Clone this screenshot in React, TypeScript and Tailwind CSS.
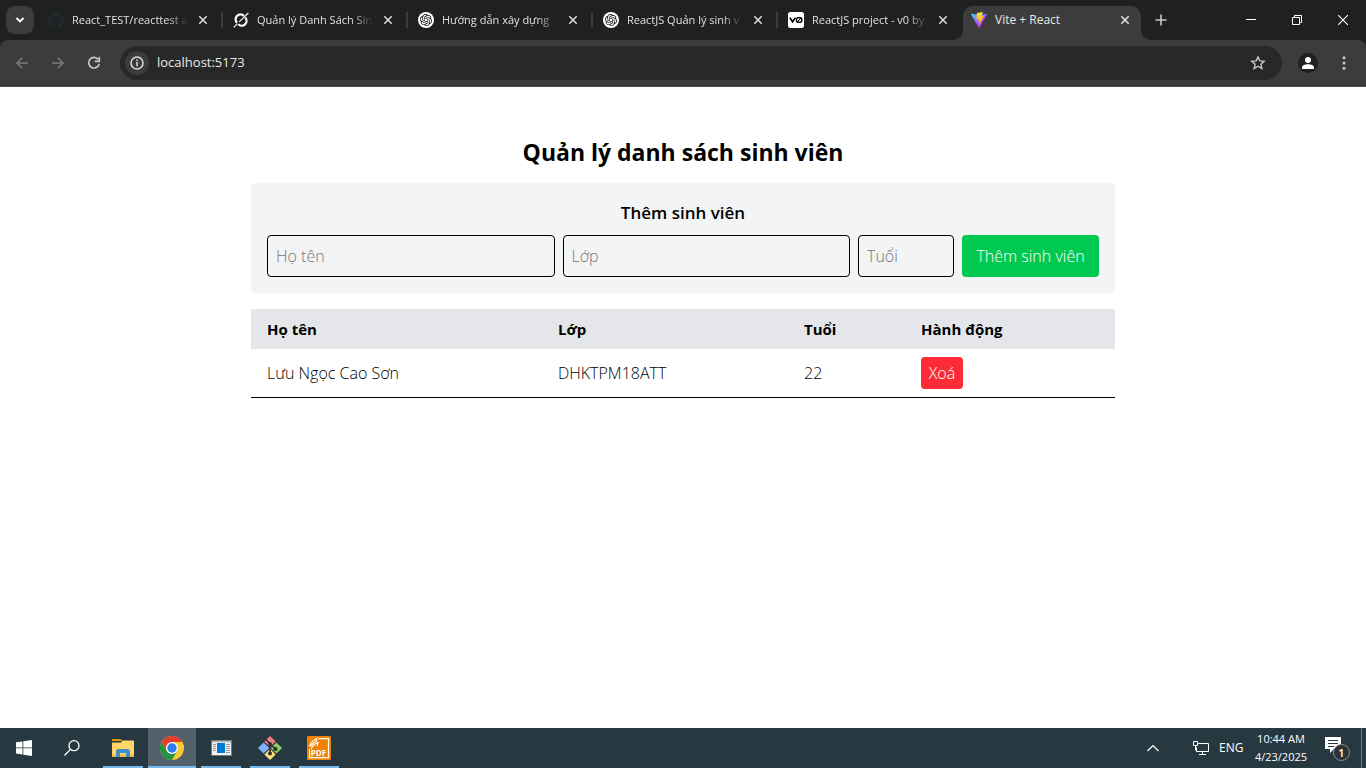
import { useState } from "react";
import type { FormEvent, ReactNode } from "react";
import { SiOpenai } from "react-icons/si";

type Student = { name: string; className: string; age: string };

function GithubIcon() {
  return (
    <svg viewBox="0 0 16 16" className="size-4 shrink-0" fill="#24292f" aria-hidden="true">
      <path d="M8 0C3.58 0 0 3.58 0 8c0 3.54 2.29 6.53 5.47 7.59.4.07.55-.17.55-.38v-1.49c-2.01.37-2.53-.49-2.69-.94-.09-.23-.48-.94-.82-1.13-.28-.15-.68-.52-.01-.53.63-.01 1.08.58 1.23.82.72 1.21 1.87.87 2.33.66.07-.52.28-.87.51-1.07-1.78-.2-3.64-.89-3.64-3.95 0-.87.31-1.59.82-2.15-.08-.2-.36-1.02.08-2.12 0 0 .67-.21 2.2.82a7.6 7.6 0 0 1 4 0c1.53-1.04 2.2-.82 2.2-.82.44 1.1.16 1.92.08 2.12.51.56.82 1.27.82 2.15 0 3.07-1.87 3.75-3.65 3.95.29.25.54.73.54 1.48v2.19c0 .21.15.46.55.38A8 8 0 0 0 8 0Z" />
    </svg>
  );
}

function GrokIcon() {
  return (
    <svg viewBox="0 0 16 16" className="size-4 shrink-0" fill="none" stroke="#fff" aria-hidden="true">
      <path d="M10.900 3.900A4.700 4.700 0 0 0 4 10.800" strokeWidth="2.200" />
      <path d="M5.300 12.200A4.700 4.700 0 0 0 12.200 5.600" strokeWidth="2.200" />
      <path d="M6.200 9.900 15.300 1" strokeWidth="1.100" />
      <path d="M.8 15.300 4.400 11.600" strokeWidth="1.100" />
    </svg>
  );
}

function ChatGptIcon() {
  return (
    <span className="flex size-4 shrink-0 items-center justify-center rounded-full bg-white text-[#111]">
      <SiOpenai className="size-3" aria-hidden="true" />
    </span>
  );
}

function V0Icon() {
  return (
    <svg viewBox="0 0 16 16" className="size-4 shrink-0" fill="none" stroke="#000" strokeWidth="1.4" aria-hidden="true">
      <rect width="16" height="16" rx="2.5" fill="#fff" stroke="none" />
      <path d="M1.800 5.600 4.600 9.800 7.400 5.600" strokeWidth="1.600" />
      <rect x="8.500" y="5.700" width="5.300" height="4.600" rx="1.800" />
      <path d="m9 9.900 4.300-3.800" strokeWidth="1" />
    </svg>
  );
}

function ViteIcon() {
  return (
    <svg viewBox="0 0 256 257" className="size-4 shrink-0" aria-hidden="true">
      <defs>
        <linearGradient id="viteA" x1="-.8%" x2="57.6%" y1="7.7%" y2="78.4%">
          <stop offset="0%" stopColor="#41D1FF" />
          <stop offset="100%" stopColor="#BD34FE" />
        </linearGradient>
        <linearGradient id="viteB" x1="43.4%" x2="50.3%" y1="2.2%" y2="89%">
          <stop offset="0%" stopColor="#FFEA83" />
          <stop offset="8.3%" stopColor="#FFDD35" />
          <stop offset="100%" stopColor="#FFA800" />
        </linearGradient>
      </defs>
      <path fill="url(#viteA)" d="M255.153 37.938 134.897 252.976c-2.483 4.44-8.862 4.466-11.382.048L.875 37.958c-2.746-4.814 1.371-10.646 6.827-9.67l120.385 21.517a6.537 6.537 0 0 0 2.322-.004l117.867-21.483c5.438-.991 9.574 4.796 6.877 9.62Z" />
      <path fill="url(#viteB)" d="M185.432.063 96.44 17.501a3.268 3.268 0 0 0-2.634 3.014l-5.474 92.456a3.268 3.268 0 0 0 3.997 3.378l24.777-5.718c2.318-.535 4.413 1.507 3.936 3.838l-7.361 36.047c-.495 2.426 1.782 4.5 4.151 3.78l15.304-4.649c2.372-.72 4.652 1.36 4.15 3.788l-11.698 56.621c-.732 3.542 3.979 5.473 5.943 2.437l1.313-2.028 72.516-144.72c1.215-2.423-.88-5.186-3.54-4.672l-25.505 4.922c-2.396.462-4.435-1.77-3.759-4.114l16.646-57.705c.677-2.35-1.37-4.583-3.769-4.113Z" />
    </svg>
  );
}

function CloseGlyph() {
  return (
    <svg viewBox="0 0 10 10" className="size-[10px]" stroke="currentColor" strokeWidth="1.5" aria-hidden="true">
      <path d="m1.300 1.300 7.400 7.400M8.700 1.300 1.300 8.700" />
    </svg>
  );
}

function Tab({ icon, title, last = false }: { icon: ReactNode; title: string; last?: boolean }) {
  return (
    <div className={last ? "flex h-10 w-[175px] shrink-0 items-center pl-[10px]" : "flex h-10 w-[185px] shrink-0 items-center pl-[10px]"}>
      {icon}
      <span className="ml-2 w-[116px] overflow-hidden whitespace-nowrap text-[11px] text-[#dfe1e0] [mask-image:linear-gradient(to_right,black_82%,transparent)]">
        {title}
      </span>
      <button type="button" aria-label="Close tab" className="ml-[7px] flex size-4 shrink-0 items-center justify-center text-[#dfe1e0]">
        <CloseGlyph />
      </button>
      {!last && <span className="ml-auto h-4 w-[2px] bg-[#3c3c3c]" />}
    </div>
  );
}

function TabStrip() {
  return (
    <div className="flex h-10 items-center bg-[#1f2120]">
      <button type="button" aria-label="Search tabs" className="ml-[6px] mr-1 flex size-7 shrink-0 items-center justify-center rounded-[9px] bg-[#3c3c3c] text-white">
        <svg viewBox="0 0 10 10" className="size-[10px]" fill="none" stroke="currentColor" strokeWidth="1.8" aria-hidden="true">
          <path d="m1.500 3 3.500 3.500L8.500 3" />
        </svg>
      </button>
      <Tab icon={<GithubIcon />} title="React_TEST/reacttest a" />
      <Tab icon={<GrokIcon />} title="Quản lý Danh Sách Sin" />
      <Tab icon={<ChatGptIcon />} title="Hướng dẫn xây dựng" />
      <Tab icon={<ChatGptIcon />} title="ReactJS Quản lý sinh v" />
      <Tab icon={<V0Icon />} title="ReactJS project - v0 by" last />
      <div className="flex shrink-0 items-end self-end">
        <svg viewBox="0 0 10 10" className="size-[10px]" aria-hidden="true">
          <path d="M10 0v10H0A10 10 0 0 0 10 0Z" fill="#3c3c3c" />
        </svg>
        <div className="flex h-[34px] w-[178px] items-center rounded-t-[10px] bg-[#3c3c3c] px-2 pb-[6px]">
          <ViteIcon />
          <span className="ml-2 grow text-[12px] text-[#e8e8e8]">Vite + React</span>
          <button type="button" aria-label="Close tab" className="flex size-4 items-center justify-center text-[#e8e8e8]">
            <CloseGlyph />
          </button>
        </div>
        <svg viewBox="0 0 10 10" className="size-[10px]" aria-hidden="true">
          <path d="M0 0v10h10A10 10 0 0 1 0 0Z" fill="#3c3c3c" />
        </svg>
      </div>
      <button type="button" aria-label="New tab" className="flex size-5 shrink-0 items-center justify-center text-[#c7c7c7]">
        <svg viewBox="0 0 12 12" className="size-3" stroke="currentColor" strokeWidth="1.6" aria-hidden="true">
          <path d="M6 .5v11M.5 6h11" />
        </svg>
      </button>
      <div className="ml-auto flex shrink-0 text-white">
        <button type="button" aria-label="Minimize" className="flex h-10 w-[46px] items-center justify-center">
          <svg viewBox="0 0 10 10" className="size-[10px]" stroke="currentColor" aria-hidden="true"><path d="M0 4.500h10" /></svg>
        </button>
        <button type="button" aria-label="Restore" className="flex h-10 w-[46px] items-center justify-center">
          <svg viewBox="0 0 10 10" className="size-[10px]" fill="none" stroke="currentColor" aria-hidden="true">
            <path d="M.5 2.500h7v7h-7zM2.500 2.500v-2h7v7h-2" />
          </svg>
        </button>
        <button type="button" aria-label="Close" className="flex h-10 w-[46px] items-center justify-center">
          <svg viewBox="0 0 10 10" className="size-[10px]" stroke="currentColor" strokeWidth="1.1" aria-hidden="true"><path d="m0 0 10 10M10 0 0 10" /></svg>
        </button>
      </div>
    </div>
  );
}

function Toolbar() {
  return (
    <div className="bg-[#1f2120]">
      <div className="flex h-[47px] items-center rounded-t-[8px] border-b border-[#4a4a4a] bg-[#3c3c3c] pl-3">
        <button type="button" aria-label="Back" className="flex size-5 items-center justify-center text-[#7c7c7c]">
          <svg viewBox="0 0 12 12" className="size-3" fill="none" stroke="currentColor" strokeWidth="1.5" aria-hidden="true"><path d="M12 6H1M6.200.700.9 6l5.300 5.300" /></svg>
        </button>
        <button type="button" aria-label="Forward" className="ml-4 flex size-5 items-center justify-center text-[#7c7c7c]">
          <svg viewBox="0 0 12 12" className="size-3" fill="none" stroke="currentColor" strokeWidth="1.5" aria-hidden="true"><path d="M0 6h11M5.800.700 11.100 6l-5.300 5.300" /></svg>
        </button>
        <button type="button" aria-label="Reload" className="ml-4 flex size-5 items-center justify-center text-[#c7c7c7]">
          <svg viewBox="0 0 14 14" className="size-[14px]" fill="none" stroke="currentColor" strokeWidth="1.7" aria-hidden="true">
            <path d="M11.300 3.500A5.300 5.300 0 1 0 12.200 8" />
            <path d="M12.300.800v4.500H7.800" />
          </svg>
        </button>
        <div className="ml-4 flex h-[34px] grow items-center rounded-full bg-[#282828] pl-[5px] pr-4">
          <button type="button" aria-label="Site information" className="flex size-6 items-center justify-center rounded-full bg-[#3c3c3c] text-[#dcdcdc]">
            <svg viewBox="0 0 14 14" className="size-[14px]" fill="none" stroke="currentColor" strokeWidth="1.5" aria-hidden="true">
              <circle cx="7" cy="7" r="6" />
              <path d="M7 6v4.200M7 3.500v1.400" />
            </svg>
          </button>
          <input aria-label="Address" defaultValue="localhost:5173" className="ml-2 min-w-0 grow bg-transparent text-[13px] text-[#e8e8e8] outline-none" />
          <button type="button" aria-label="Bookmark" className="text-[#c7c7c7]">
            <svg viewBox="0 0 16 16" className="size-4" fill="none" stroke="currentColor" strokeWidth="1.4" aria-hidden="true">
              <path d="m8 1.900 1.800 4 4.400.4-3.300 2.900 1 4.300L8 11.200l-3.900 2.300 1-4.300-3.300-2.900 4.400-.4Z" />
            </svg>
          </button>
        </div>
        <button type="button" aria-label="Profile" className="ml-4 flex size-5 items-center justify-center rounded-full bg-[#1f2120] text-white">
          <svg viewBox="0 0 12 12" className="size-3" fill="currentColor" aria-hidden="true">
            <circle cx="6" cy="3" r="3" />
            <path d="M0 12V10.500C0 8.300 3 7.200 6 7.200s6 1.100 6 3.300V12Z" />
          </svg>
        </button>
        <button type="button" aria-label="Menu" className="ml-4 mr-3 flex size-5 items-center justify-center text-[#c7c7c7]">
          <svg viewBox="0 0 4 14" className="h-[14px] w-1" fill="currentColor" aria-hidden="true">
            <circle cx="2" cy="1.800" r="1.500" /><circle cx="2" cy="7" r="1.500" /><circle cx="2" cy="12.200" r="1.500" />
          </svg>
        </button>
      </div>
    </div>
  );
}

function StudentPage() {
  const [students, setStudents] = useState<Student[]>([{ name: "Lưu Ngọc Cao Sơn", className: "DHKTPM18ATT", age: "22" }]);
  const [form, setForm] = useState<Student>({ name: "", className: "", age: "" });

  const add = (e: FormEvent) => {
    e.preventDefault();
    if (!form.name || !form.className || !form.age) return;
    setStudents([...students, form]);
    setForm({ name: "", className: "", age: "" });
  };

  const field = "h-[42px] rounded border border-black p-2 placeholder:text-[#757679]";

  return (
    <main className="grow bg-white pt-[50px] text-[16px] font-light leading-6 text-black">
      <div className="mx-auto max-w-[864px]">
        <h1 className="mb-4 text-center text-[23px] font-bold leading-[30px]">Quản lý danh sách sinh viên</h1>
        <form onSubmit={add} className="mb-4 rounded bg-[#f3f4f6] p-4">
          <h2 className="mb-2 text-center text-[17px] font-semibold leading-7">Thêm sinh viên</h2>
          <div className="flex gap-2">
            <input aria-label="Họ tên" placeholder="Họ tên" value={form.name} onChange={(e) => setForm({ ...form, name: e.target.value })} className={`${field} min-w-0 flex-1`} />
            <input aria-label="Lớp" placeholder="Lớp" value={form.className} onChange={(e) => setForm({ ...form, className: e.target.value })} className={`${field} min-w-0 flex-1`} />
            <input aria-label="Tuổi" placeholder="Tuổi" value={form.age} onChange={(e) => setForm({ ...form, age: e.target.value })} className={`${field} w-24`} />
            <button type="submit" className="w-[137px] whitespace-nowrap rounded bg-[#00c951] text-white">Thêm sinh viên</button>
          </div>
        </form>
        <table className="w-full table-fixed border-collapse text-left">
          <colgroup>
            <col className="w-[291px]" />
            <col className="w-[246px]" />
            <col className="w-[117px]" />
            <col />
          </colgroup>
          <thead>
            <tr className="bg-[#e5e6ea] text-[15px]">
              {["Họ tên", "Lớp", "Tuổi", "Hành động"].map((h) => (
                <th key={h} className="px-4 py-2 font-bold">{h}</th>
              ))}
            </tr>
          </thead>
          <tbody>
            {students.map((s, i) => (
              <tr key={i} className="border-b border-black">
                <td className="px-4 py-2">{s.name}</td>
                <td className="px-4 py-2">{s.className}</td>
                <td className="px-4 py-2">{s.age}</td>
                <td className="px-4 py-2">
                  <button type="button" onClick={() => setStudents(students.filter((_, j) => j !== i))} className="block h-8 w-[42px] rounded bg-[#fb2c36] text-white">
                    Xoá
                  </button>
                </td>
              </tr>
            ))}
          </tbody>
        </table>
      </div>
    </main>
  );
}

function TaskButton({ label, active = false, children }: { label: string; active?: boolean; children: ReactNode }) {
  return (
    <button type="button" aria-label={label} className={active ? "flex h-10 w-12 flex-col items-center bg-[#53626a]" : "flex h-10 w-12 flex-col items-center"}>
      <span className="flex grow items-center pt-[2px]">{children}</span>
      <span className={active ? "h-[2px] w-12 bg-[#76b9ed]" : "h-[2px] w-10 bg-[#76b9ed]"} />
    </button>
  );
}

function Taskbar() {
  return (
    <footer className="flex h-10 items-center bg-[#263840] text-white">
      <button type="button" aria-label="Start" className="flex h-10 w-12 items-center justify-center">
        <svg viewBox="0 0 16 16" className="size-4" fill="#fff" aria-hidden="true">
          <path d="M0 2.300 6.500 1.400v6.100H0ZM7.300 1.300 16 0v7.500H7.300ZM0 8.300h6.500v6.200L0 13.600ZM7.300 8.300H16V16l-8.700-1.300Z" />
        </svg>
      </button>
      <button type="button" aria-label="Search" className="mr-[3px] flex h-10 w-12 items-center justify-center">
        <svg viewBox="0 0 16 16" className="size-4" fill="none" stroke="#fff" strokeWidth="1.300" aria-hidden="true">
          <circle cx="10" cy="5.700" r="5" /><path d="M6.400 9.400.5 15.500" />
        </svg>
      </button>
      <div className="flex gap-px">
        <TaskButton label="File Explorer">
          <svg viewBox="0 0 22 18" className="h-[18px] w-[22px]" aria-hidden="true">
            <path d="M0 1q0-1 1-1h7.500l2 2H0Z" fill="#e09a00" />
            <path d="M0 3.500h9l1.500-2H21q1 0 1 1V18H0Z" fill="#ffd667" />
            <path d="M0 15.500h22V18H0Z" fill="#f3bd45" />
            <path d="M4 18v-6.500L5.500 10h11l1.500 1.500V18h-4v-4H8v4Z" fill="#3e8fcf" />
          </svg>
        </TaskButton>
        <TaskButton label="Chrome" active>
          <svg viewBox="0 0 24 24" className="size-6" aria-hidden="true">
            <circle cx="12" cy="12" r="12" fill="#fcc934" />
            <path d="M1.600 6A12 12 0 0 0 12 24l5.200-9H6.800Z" fill="#229342" />
            <path d="M12 6h10.400A12 12 0 0 0 1.600 6l5.200 9Z" fill="#e33b2e" />
            <circle cx="12" cy="12" r="6" fill="#fff" /><circle cx="12" cy="12" r="4.700" fill="#2b7cf0" />
          </svg>
        </TaskButton>
        <TaskButton label="Console">
          <svg viewBox="0 0 21 16" className="h-4 w-[21px]" aria-hidden="true">
            <path d="M0 0h21v16H0Z" fill="#777" /><path d="M1 1h19v14H1Z" fill="#f3f3f3" />
            <path d="M1 1h19v1.500H1Z" fill="#bbb" /><path d="M6 3h8v10H6Z" fill="#0078d7" />
            <path d="M2 4.500h3M2 6.500h3M2 8.500h3M2 10.500h3M15 4.500h4M15 6.500h4M15 8.500h4M15 10.500h4M15 12.500h4" stroke="#999" />
          </svg>
        </TaskButton>
        <TaskButton label="Git">
          <svg viewBox="0 0 24 24" className="size-6" aria-hidden="true">
            <path d="m12 0 5.600 5.600L12 11.200 6.400 5.600Z" fill="#f37f84" />
            <path d="m18.400 6.400 5.600 5.600-5.600 5.600-5.600-5.600Z" fill="#8bd06b" />
            <path d="m12 12.800 5.600 5.600L12 24l-5.600-5.600Z" fill="#ffe27a" />
            <path d="M5.600 6.400 11.200 12l-5.600 5.600L0 12Z" fill="#80b3ff" />
            <path d="M7.500 3 12 7.500v10M12 8l5.500 5" fill="none" stroke="#302d2d" strokeWidth="1.600" />
            <circle cx="12" cy="8" r="1.900" fill="#302d2d" /><circle cx="12" cy="17.500" r="2" fill="#302d2d" /><circle cx="17.500" cy="13" r="2" fill="#302d2d" />
          </svg>
        </TaskButton>
        <TaskButton label="PDF">
          <svg viewBox="0 0 24 24" className="size-6" fill="none" stroke="#fff" strokeWidth="1.200" aria-hidden="true">
            <rect width="24" height="24" rx="1" fill="#f08200" stroke="none" />
            <path d="M11.500 2.600h10v19h-19V13M2.500 10.500q1.500-5.500 7.500-8l-1 3q-3.500 1.500-5 4.500M4 13q2-4.500 7-6.500L10 10" />
            <text x="3.700" y="20" fontSize="8" fontWeight="700" fill="#fff" stroke="none">PDF</text>
          </svg>
        </TaskButton>
      </div>
      <div className="ml-auto flex h-10 items-center text-[12px] leading-[18px]">
        <button type="button" aria-label="Show hidden icons" className="mr-[34px]">
          <svg viewBox="0 0 12 8" className="h-2 w-3" fill="none" stroke="#fff" strokeWidth="1.200" aria-hidden="true"><path d="m.5 7 5.500-5.500L11.500 7" /></svg>
        </button>
        <svg viewBox="0 0 16 14" className="h-[14px] w-4" fill="none" stroke="#fff" aria-hidden="true">
          <path d="M5 2.500h10.500v8H3.500V6M9.500 10.500v3M6 13.500h7M.5.500h4v4h-4zM2.500 4.500v5" />
        </svg>
        <span className="ml-[10px] w-6 whitespace-nowrap">ENG</span>
        <time className="ml-[10px] w-[56px] whitespace-nowrap text-center text-[11px]">
          10:44 AM<br />4/23/2025
        </time>
        <button type="button" aria-label="Notifications" className="ml-4 mr-[10px]">
          <svg viewBox="0 0 26 26" className="size-[26px]" aria-hidden="true">
            <path d="M0 2h16v12H9l-4 4v-4H0Z" fill="#fff" />
            <path d="M3 5.500h10M3 8.500h10M3 11.500h6" stroke="#263840" />
            <circle cx="16.500" cy="17.500" r="8" fill="#2d3133" stroke="#8c9294" />
            <text x="16.500" y="21.500" fontSize="11" fontWeight="600" textAnchor="middle" fill="#fff">1</text>
          </svg>
        </button>
        <span className="mr-[4px] h-10 w-px bg-[#6d7a80]" />
      </div>
    </footer>
  );
}

export default function App() {
  return (
    <div className="flex min-h-screen flex-col overflow-x-hidden font-['Open_Sans','Noto_Sans',sans-serif]">
      <TabStrip />
      <Toolbar />
      <StudentPage />
      <Taskbar />
    </div>
  );
}
